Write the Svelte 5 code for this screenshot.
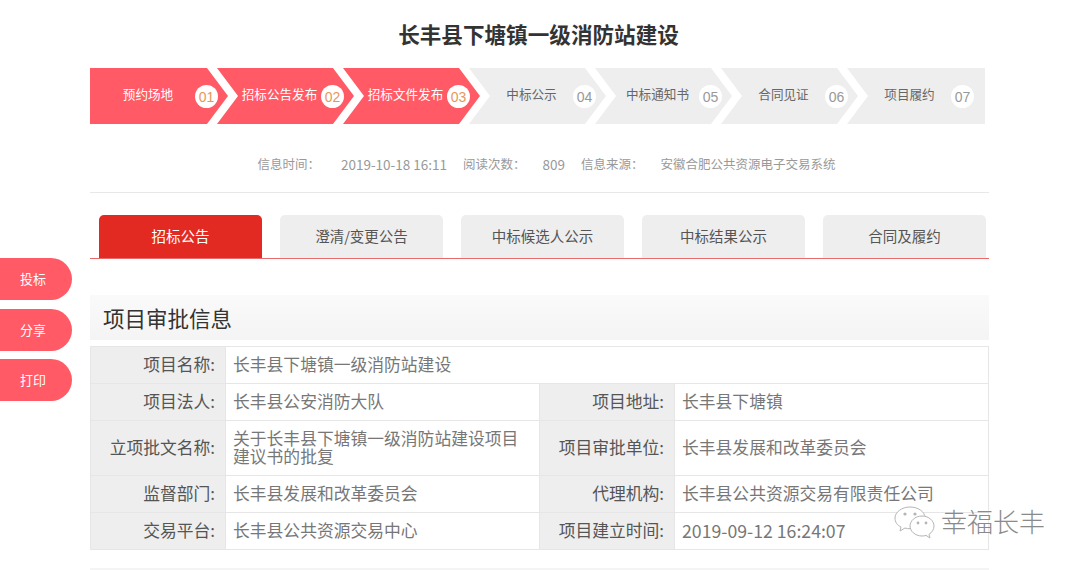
<script>
  const steps = [
    { name: '预约场地', no: '01', done: true },
    { name: '招标公告发布', no: '02', done: true },
    { name: '招标文件发布', no: '03', done: true },
    { name: '中标公示', no: '04', done: false },
    { name: '中标通知书', no: '05', done: false },
    { name: '合同见证', no: '06', done: false },
    { name: '项目履约', no: '07', done: false }
  ];
  const tabs = ['招标公告', '澄清/变更公告', '中标候选人公示', '中标结果公示', '合同及履约'];
  const side = ['投标', '分享', '打印'];
</script>

<div class="page">
  <h1 class="title">长丰县下塘镇一级消防站建设</h1>

  <div class="steps">
    {#each steps as s}
      <div class="step" class:done={s.done}>
        <span class="step-name">{s.name}</span>
        <span class="step-no">{s.no}</span>
      </div>
    {/each}
  </div>

  <div class="meta">
    <span class="m1 first">信息时间：</span>
    <span class="m2">2019-10-18 16:11</span>
    <span class="m1">阅读次数：</span>
    <span class="m2">809</span>
    <span class="m1">信息来源：</span>
    <span>安徽合肥公共资源电子交易系统</span>
  </div>

  <div class="tabs">
    {#each tabs as t, i}
      <div class="tab" class:active={i === 0}>{t}</div>
    {/each}
  </div>

  <h2 class="section">项目审批信息</h2>

  <table class="info">
    <colgroup>
      <col class="c1" /><col class="c2" /><col class="c3" /><col />
    </colgroup>
    <tbody>
      <tr>
        <th>项目名称:</th>
        <td colspan="3">长丰县下塘镇一级消防站建设</td>
      </tr>
      <tr>
        <th>项目法人:</th>
        <td>长丰县公安消防大队</td>
        <th>项目地址:</th>
        <td>长丰县下塘镇</td>
      </tr>
      <tr class="tall">
        <th>立项批文名称:</th>
        <td class="wrap">关于长丰县下塘镇一级消防站建设项目建议书的批复</td>
        <th>项目审批单位:</th>
        <td>长丰县发展和改革委员会</td>
      </tr>
      <tr>
        <th>监督部门:</th>
        <td>长丰县发展和改革委员会</td>
        <th>代理机构:</th>
        <td>长丰县公共资源交易有限责任公司</td>
      </tr>
      <tr>
        <th>交易平台:</th>
        <td>长丰县公共资源交易中心</td>
        <th>项目建立时间:</th>
        <td class="date">2019-09-12 16:24:07</td>
      </tr>
    </tbody>
  </table>

  <div class="next-line"></div>
</div>

<div class="side">
  {#each side as s}
    <div class="side-btn">{s}</div>
  {/each}
</div>

<div class="mark">
  <svg width="42" height="34" viewBox="0 0 42 34" fill="#fff" stroke="#b5b5b5" stroke-width="1">
    <path d="M17 2C9 2 2 7 2 13c0 4 2 7 6 9l-1 4 5-3c2 .6 3 .7 5 .7 8 0 15-5 15-11S25 2 17 2z" />
    <circle cx="12" cy="9" r="1.6" fill="#b5b5b5" stroke="none" />
    <circle cx="22" cy="9" r="1.6" fill="#b5b5b5" stroke="none" />
    <path d="M29 11c-7 0-12 5-12 10s5 10 12 10c1.500 0 3-.2 4-.6l4 2.600-1-3.600c3-2 5-5 5-8.400 0-5-5-10-12-10z" />
    <circle cx="25" cy="18" r="1.400" fill="#b5b5b5" stroke="none" />
    <circle cx="33" cy="18" r="1.400" fill="#b5b5b5" stroke="none" />
  </svg>
  <span>幸福长丰</span>
</div>

<style>
  :global(body) {
    margin: 0;
    background: #fff;
    font-family: "Noto Sans CJK SC", "Liberation Sans", sans-serif;
    overflow: hidden;
  }

  .page {
    width: 899px;
    margin-left: 90px;
    height: 570px;
    overflow: hidden;
  }

  .title {
    margin: 0;
    height: 68px;
    padding: 19px 2px 0 0;
    box-sizing: border-box;
    line-height: 30px;
    font-size: 21.600px;
    font-weight: 700;
    color: #333;
    text-align: center;
  }

  .steps {
    display: flex;
    width: 895px;
    height: 56px;
  }

  .step {
    flex: none;
    width: 137px;
    height: 56px;
    margin-left: -11px;
    box-sizing: border-box;
    padding-left: 23px;
    display: flex;
    align-items: center;
    background: #eeeeee;
    color: #666;
    font-size: 12.600px;
    clip-path: polygon(0 0, 116px 0, 137px 50%, 116px 100%, 0 100%, 21px 50%);
  }

  .step:first-child {
    margin-left: 0;
    width: 138px;
    padding-left: 11px;
    clip-path: polygon(0 0, 117px 0, 138px 50%, 117px 100%, 0 100%);
  }

  .step:last-child {
    width: 138px;
    clip-path: polygon(0 0, 100% 0, 100% 100%, 0 100%, 21px 50%);
  }

  .step.done {
    background: #ff5a65;
    color: #fff;
  }

  .step-name {
    width: 79px;
    margin-right: 2px;
    text-align: center;
    white-space: nowrap;
    margin-bottom: 5px;
  }

  .step:first-child .step-name {
    width: 94px;
    margin-right: 0;
  }

  .step-no {
    width: 23px;
    height: 23px;
    border-radius: 50%;
    background: #fff;
    color: #999;
    font-family: "Liberation Sans", sans-serif;
    font-size: 14px;
    line-height: 24px;
    text-align: center;
    flex: none;
  }

  .step.done .step-no {
    color: #e8975a;
  }

  .meta {
    display: flex;
    justify-content: center;
    height: 69px;
    box-sizing: border-box;
    padding-top: 31px;
    padding-left: 14px;
    line-height: 18px;
    font-size: 12.500px;
    color: #999;
    border-bottom: 1px solid #e8e8e8;
  }

  .meta .m1 {
    margin-right: 17px;
  }

  .meta .m1.first {
    margin-right: 21px;
  }

  .meta .m2 {
    margin-right: 16px;
    font-size: 13.500px;
  }

  .tabs {
    display: flex;
    gap: 18px;
    margin-top: 22px;
    padding-left: 9px;
    height: 44px;
    box-sizing: border-box;
    border-bottom: 1px solid #e86a6a;
  }

  .tab {
    width: 163px;
    height: 43px;
    border-radius: 5px 5px 0 0;
    background: #eeeeee;
    color: #555;
    font-size: 14.500px;
    line-height: 42px;
    text-align: center;
  }

  .tab.active {
    background: #e32a22;
    color: #fff;
  }

  .section {
    margin: 36px 0 0;
    height: 45px;
    padding-left: 13px;
    line-height: 45px;
    font-size: 21.500px;
    font-weight: 400;
    color: #333;
    background: linear-gradient(#fafafa, #f4f4f4);
  }

  .info {
    margin-top: 6px;
    width: 899px;
    table-layout: fixed;
    border-collapse: collapse;
    font-size: 16.800px;
    line-height: 18px;
  }

  .c1 { width: 135px; }
  .c2 { width: 314px; }
  .c3 { width: 135px; }

  .info tr {
    height: 37px;
  }

  .info tr.tall {
    height: 55px;
  }

  .info th,
  .info td {
    border: 1px solid #e6e6e6;
    padding: 0 10px 2px 7px;
    box-sizing: border-box;
  }

  .info th {
    background: #eeeeee;
    color: #555;
    font-weight: 400;
    text-align: right;
    white-space: nowrap;
  }

  .info td {
    color: #777;
    white-space: nowrap;
  }

  .info td.wrap {
    white-space: normal;
  }

  .info td.date {
    font-size: 17.700px;
  }

  .next-line {
    margin-top: 18px;
    height: 2px;
    background: #f4f4f4;
  }

  .side {
    position: absolute;
    left: 0;
    top: 258px;
    display: flex;
    flex-direction: column;
    gap: 8.500px;
  }

  .side-btn {
    width: 72px;
    height: 42px;
    box-sizing: border-box;
    padding: 0 6px 1px 0;
    border-radius: 0 21px 21px 0;
    background: #ff5a65;
    color: #fff;
    font-size: 13px;
    line-height: 41px;
    text-align: center;
  }

  .mark {
    position: absolute;
    left: 893px;
    top: 505px;
    display: flex;
    align-items: center;
    gap: 6px;
  }

  .mark span {
    font-size: 26px;
    font-weight: 300;
    line-height: 34px;
    margin-top: -2px;
    color: #8a8a8a;
    text-shadow: 0 0 2px #fff;
  }
</style>
